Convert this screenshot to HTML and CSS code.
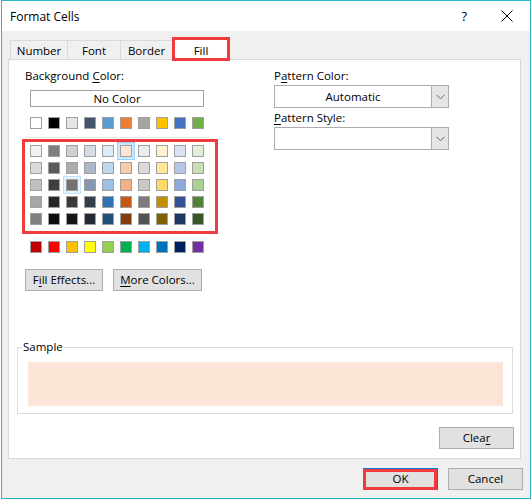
FILE: index.html
```html
<!DOCTYPE html>
<html>
<head>
<meta charset="utf-8">
<title>Format Cells</title>
<link rel="stylesheet" href="styles.css">
</head>
<body>
<div class="window">
  <div class="titlebar">
    <span class="title">Format Cells</span>
    <span class="help">?</span>
    <svg class="close" width="12" height="12" viewBox="0 0 12 12"><path d="M0.5 0.5L11.5 11.5M11.5 0.5L0.5 11.5" stroke="#000" stroke-width="1" fill="none"/></svg>
  </div>
  <div class="body">
    <div class="tabs">
      <div class="tab tab-number">Number</div>
      <div class="tab tab-font">Font</div>
      <div class="tab tab-border">Border</div>
      <div class="tab tab-fill active">Fill</div>
    </div>
    <div class="panel">
      <div class="top">
        <div class="left">
          <div class="label">Background <u>C</u>olor:</div>
          <div class="nocolor">No Color</div>
          <div class="swatches theme">
            <span class="sw" style="background:#FFFFFF"></span>
            <span class="sw" style="background:#000000"></span>
            <span class="sw" style="background:#E7E6E6"></span>
            <span class="sw" style="background:#44546A"></span>
            <span class="sw" style="background:#5B9BD5"></span>
            <span class="sw" style="background:#ED7D31"></span>
            <span class="sw" style="background:#A5A5A5"></span>
            <span class="sw" style="background:#FFC000"></span>
            <span class="sw" style="background:#4472C4"></span>
            <span class="sw" style="background:#70AD47"></span>
          </div>
          <div class="sep"></div>
          <div class="swatches tints">
            <span class="sw" style="background:#F2F2F2"></span>
            <span class="sw" style="background:#7F7F7F"></span>
            <span class="sw" style="background:#D0CECE"></span>
            <span class="sw" style="background:#D6DCE4"></span>
            <span class="sw" style="background:#DDEBF7"></span>
            <span class="sw selected" style="background:#FCE4D6"></span>
            <span class="sw" style="background:#EDEDED"></span>
            <span class="sw" style="background:#FFF2CC"></span>
            <span class="sw" style="background:#D9E1F2"></span>
            <span class="sw" style="background:#E2EFDA"></span>

            <span class="sw" style="background:#D9D9D9"></span>
            <span class="sw" style="background:#595959"></span>
            <span class="sw" style="background:#AEAAAA"></span>
            <span class="sw" style="background:#ACB9CA"></span>
            <span class="sw" style="background:#BDD7EE"></span>
            <span class="sw" style="background:#F8CBAD"></span>
            <span class="sw" style="background:#DBDBDB"></span>
            <span class="sw" style="background:#FFE699"></span>
            <span class="sw" style="background:#B4C6E7"></span>
            <span class="sw" style="background:#C6E0B4"></span>

            <span class="sw" style="background:#BFBFBF"></span>
            <span class="sw" style="background:#404040"></span>
            <span class="sw hover" style="background:#757171"></span>
            <span class="sw" style="background:#8497B0"></span>
            <span class="sw" style="background:#9BC2E6"></span>
            <span class="sw" style="background:#F4B084"></span>
            <span class="sw" style="background:#C9C9C9"></span>
            <span class="sw" style="background:#FFD966"></span>
            <span class="sw" style="background:#8EA9DB"></span>
            <span class="sw" style="background:#A9D08E"></span>

            <span class="sw" style="background:#A6A6A6"></span>
            <span class="sw" style="background:#262626"></span>
            <span class="sw" style="background:#3A3838"></span>
            <span class="sw" style="background:#333F4F"></span>
            <span class="sw" style="background:#2F75B5"></span>
            <span class="sw" style="background:#C65911"></span>
            <span class="sw" style="background:#7B7B7B"></span>
            <span class="sw" style="background:#BF8F00"></span>
            <span class="sw" style="background:#305496"></span>
            <span class="sw" style="background:#548235"></span>

            <span class="sw" style="background:#808080"></span>
            <span class="sw" style="background:#0D0D0D"></span>
            <span class="sw" style="background:#161616"></span>
            <span class="sw" style="background:#222B35"></span>
            <span class="sw" style="background:#1F4E78"></span>
            <span class="sw" style="background:#833C0C"></span>
            <span class="sw" style="background:#525252"></span>
            <span class="sw" style="background:#806000"></span>
            <span class="sw" style="background:#203764"></span>
            <span class="sw" style="background:#375623"></span>
          </div>
          <div class="swatches standard">
            <span class="sw" style="background:#C00000"></span>
            <span class="sw" style="background:#FF0000"></span>
            <span class="sw" style="background:#FFC000"></span>
            <span class="sw" style="background:#FFFF00"></span>
            <span class="sw" style="background:#92D050"></span>
            <span class="sw" style="background:#00B050"></span>
            <span class="sw" style="background:#00B0F0"></span>
            <span class="sw" style="background:#0070C0"></span>
            <span class="sw" style="background:#002060"></span>
            <span class="sw" style="background:#7030A0"></span>
          </div>
          <div class="btnrow">
            <div class="btn btn-effects">F<u>i</u>ll Effects...</div>
            <div class="btn btn-more"><u>M</u>ore Colors...</div>
          </div>
        </div>
        <div class="right">
          <div class="label">P<u>a</u>ttern Color:</div>
          <div class="combo">
            <div class="combo-text">Automatic</div>
            <div class="combo-btn"><svg width="9" height="6" viewBox="0 0 9 6"><path d="M0.5 0.8L4.5 4.8L8.5 0.8" stroke="#606060" stroke-width="1" fill="none"/></svg></div>
          </div>
          <div class="label label-style"><u>P</u>attern Style:</div>
          <div class="combo combo-style">
            <div class="combo-text"></div>
            <div class="combo-btn"><svg width="9" height="6" viewBox="0 0 9 6"><path d="M0.5 0.8L4.5 4.8L8.5 0.8" stroke="#606060" stroke-width="1" fill="none"/></svg></div>
          </div>
        </div>
      </div>
      <fieldset class="sample">
        <legend>Sample</legend>
        <div class="sample-fill"></div>
      </fieldset>
      <div class="clear-row">
        <div class="btn btn-clear">Clea<u>r</u></div>
      </div>
    </div>
    <div class="footer">
      <div class="btn btn-ok">OK</div>
      <div class="btn btn-cancel">Cancel</div>
    </div>
  </div>
</div>
</body>
</html>
```
FILE: styles.css
```css
* { box-sizing: border-box; }
html, body { margin: 0; padding: 0; background: #ffffff; }
body {
  padding-left: 1px;
  font-family: "Segoe UI", "Open Sans", "Noto Sans", sans-serif;
  font-size: 11.5px;
  color: #000;
}
u { text-decoration: underline; text-underline-offset: 2px; }

.window {
  width: 530px;
  height: 499px;
  border: 1px solid #2ab3c5;
  display: flex;
  flex-direction: column;
  background: #f0f0f0;
}

.titlebar {
  height: 30px;
  background: #fff;
  display: flex;
  align-items: center;
  padding: 0 17px 0 8px;
  flex: none;
}
.title { font-size: 12px; }
.help { margin-left: auto; font-size: 13px; margin-right: 34px; }
.close { display: block; }

.body {
  flex: 1;
  display: flex;
  flex-direction: column;
  padding: 9px 9px 0 6px;
}

.tabs {
  display: flex;
  align-items: flex-end;
  height: 19px;
  margin-left: 2px;
  position: relative;
  z-index: 2;
}
.tab {
  height: 19px;
  border-top: 1px solid #d9d9d9;
  border-left: 1px solid #d9d9d9;
  text-align: center;
  line-height: 16px;
  padding-top: 2px;
  background: #f0f0f0;
}
.tab-number { width: 57px; }
.tab-font { width: 53px; }
.tab-border { width: 52px; }
.tab-fill {
  width: 58px;
  height: 22px;
  margin-bottom: -1px;
  padding-top: 4px;
  background: #fff;
  border-right: 1px solid #d9d9d9;
  position: relative;
}
.tab-fill::after {
  content: "";
  position: absolute;
  left: -1px;
  top: -2px;
  right: -1px;
  bottom: -1px;
  border: 3px solid #ef3a3e;
}

.panel {
  height: 400px;
  flex: none;
  background: #fff;
  border: 1px solid #d9d9d9;
  display: flex;
  flex-direction: column;
}

.top {
  display: flex;
  padding: 8px 0 0 16px;
}
.left { width: 249px; }
.right { flex: 1; }

.label { line-height: 16px; height: 16px; white-space: nowrap; }

.nocolor {
  margin: 6px 0 0 5px;
  width: 174px;
  height: 17px;
  border: 1px solid #a0a0a0;
  background: #fff;
  text-align: center;
  line-height: 15px;
}

.swatches {
  display: grid;
  grid-template-columns: repeat(10, 12px);
  grid-auto-rows: 12px;
  column-gap: 6px;
  row-gap: 5px;
  margin-left: 5px;
  width: 174px;
}
.theme { margin-top: 10px; }
.tints { margin-top: 7px; position: relative; }
.tints::after {
  content: "";
  position: absolute;
  left: -8px;
  top: -6px;
  right: -14px;
  bottom: -9px;
  border: 3px solid #ef3a3e;
}
.standard { margin-top: 16px; }

.sw {
  display: block;
  width: 12px;
  height: 12px;
  border: 1px solid #a0a0a0;
}
.sw.selected { box-shadow: 0 0 0 2px #cce8ff, 0 0 0 3px #99d1ff; }
.sw.hover { box-shadow: 0 0 0 2px #e5f3ff, 0 0 0 3px #c4e2fb; }

.sep {
  margin-top: 8px;
  width: 184px;
  height: 1px;
  background: #e3e3e3;
}

.btn {
  height: 22px;
  border: 1px solid #adadad;
  background: #e1e1e1;
  text-align: center;
  line-height: 20px;
  white-space: nowrap;
}
.btnrow { display: flex; gap: 10px; margin-top: 16px; }
.btn-effects { width: 78px; }
.btn-more { width: 89px; }

.combo {
  margin-top: 1px;
  width: 175px;
  height: 23px;
  border: 1px solid #acacac;
  background: #fff;
  display: flex;
}
.combo-text { flex: 1; text-align: center; line-height: 21px; }
.combo-btn {
  width: 18px;
  margin: -1px -1px -1px 0;
  border: 1px solid #acacac;
  background: #e5e5e5;
  display: flex;
  align-items: center;
  justify-content: center;
}
.combo-btn svg { display: block; }
.label-style { margin-top: 2px; }

.sample {
  margin: 48px 7px 0 8px;
  padding: 7px 9px 7px 10px;
  border: 1px solid #dcdcdc;
  min-width: 0;
}
.sample legend {
  padding: 0 1px;
  margin-left: -6px;
  line-height: 16px;
}
.sample-fill { height: 44px; background: #fce4d6; }

.clear-row { display: flex; justify-content: flex-end; margin: 13px 6px 0 0; }
.btn-clear { width: 75px; }

.footer {
  display: flex;
  justify-content: flex-end;
  gap: 10px;
  padding: 9px 0 0 0;
  margin-right: -2px;
}
.btn-ok {
  width: 75px;
  border-color: #0078d7;
  position: relative;
}
.btn-ok::after {
  content: "";
  position: absolute;
  left: -1px;
  top: 0;
  right: 0;
  bottom: -1px;
  border: 3px solid #ef3a3e;
}
.btn-cancel { width: 75px; }
```
